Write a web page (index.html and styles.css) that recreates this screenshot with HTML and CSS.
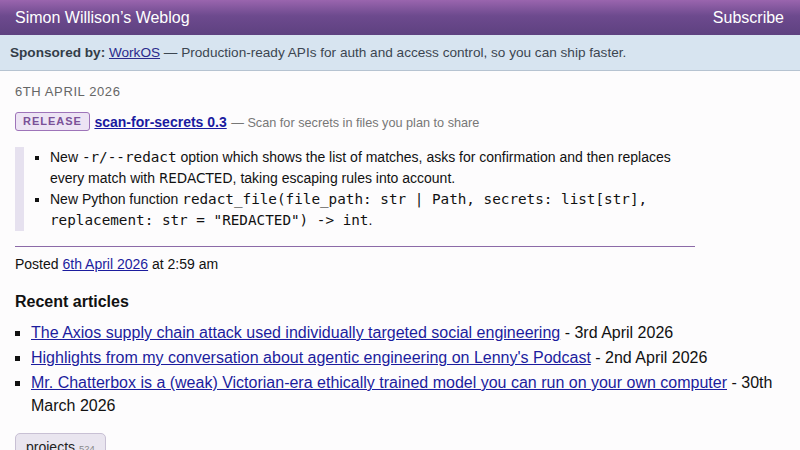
FILE: index.html
```html
<!DOCTYPE html>
<html>
<head>
<meta charset="utf-8">
<link rel="stylesheet" href="styles.css">
</head>
<body>
<header class="site-header">
  <a class="site-title" href="#">Simon Willison’s Weblog</a>
  <a class="subscribe" href="#">Subscribe</a>
</header>
<div class="sponsor">
  <p class="sponsor-text"><strong>Sponsored by:</strong> <a href="#">WorkOS</a> — Production-ready APIs for auth and access control, so you can ship faster.</p>
</div>
<main class="content">
  <div class="entry">
    <p class="date">6th April 2026</p>
    <p class="release-line"><span class="badge">Release</span> <a class="release-title" href="#">scan-for-secrets 0.3</a> <span class="release-desc">— Scan for secrets in files you plan to share</span></p>
    <blockquote class="notes">
      <ul>
        <li>New <code>-r/--redact</code> option which shows the list of matches, asks for confirmation and then replaces every match with <span class="caps">REDACTED</span>, taking escaping rules into account.</li>
        <li>New Python function <code>redact_file(file_path: str | Path, secrets: list[str], replacement: str = "REDACTED") -&gt; int</code>.</li>
      </ul>
    </blockquote>
    <p class="posted">Posted <a href="#">6th April 2026</a> at 2:59 am</p>
  </div>
  <h3 class="recent-head">Recent articles</h3>
  <ul class="recent">
    <li><a href="#">The Axios supply chain attack used individually targeted social engineering</a> - 3rd April 2026</li>
    <li><a href="#">Highlights from my conversation about agentic engineering on Lenny's Podcast</a> - 2nd April 2026</li>
    <li><a href="#">Mr. Chatterbox is a (weak) Victorian-era ethically trained model you can run on your own computer</a> - 30th March 2026</li>
  </ul>
  <div class="tags">
    <a class="tag" href="#">projects <span class="count">524</span></a>
  </div>
</main>
</body>
</html>
```
FILE: styles.css
```css
html, body {
  margin: 0;
  padding: 0;
}
body {
  background: #fdfcfd;
  font-family: "Liberation Sans", Arial, sans-serif;
  color: #111;
}
a {
  color: #1c1c9e;
}
.site-header {
  height: 35px;
  box-sizing: border-box;
  display: flex;
  justify-content: space-between;
  align-items: center;
  padding: 0 16px 0 15px;
  background: linear-gradient(to bottom, #9a65ae 0%, #6d4a8e 45%, #5e4180 100%);
}
.site-header a {
  color: #fff;
  text-decoration: none;
  font-size: 16px;
}
.sponsor {
  height: 36px;
  box-sizing: border-box;
  padding: 0 10px;
  background: #d7e4f0;
  border-bottom: 1px solid #b6c3d1;
  color: #3c4651;
}
.sponsor-text {
  margin: 0;
  font-size: 13.6px;
  line-height: 35px;
}
.sponsor strong {
  color: #333d48;
}
.sponsor a {
  color: #2a2a8c;
}
.content {
  padding: 0 15px;
}
.entry {
  width: 680px;
}
.date {
  margin: 13px 0 0;
  font-size: 13px;
  text-transform: uppercase;
  letter-spacing: 0.6px;
  color: #666;
  line-height: 16px;
}
.release-line {
  margin: 12px 0 0;
  line-height: 20px;
  height: 20px;
}
.badge {
  display: inline-block;
  vertical-align: top;
  box-sizing: border-box;
  height: 19px;
  line-height: 17px;
  padding: 0 7px;
  border: 1px solid #9e74b9;
  border-radius: 3px;
  background: #ede4f4;
  color: #7b5198;
  font-size: 11px;
  font-weight: bold;
  letter-spacing: 1px;
  text-transform: uppercase;
}
.release-title {
  font-weight: bold;
  font-size: 14px;
  color: #1a1aa0;
}
.release-desc {
  font-size: 12.7px;
  color: #777;
}
.notes {
  margin: 15px 0 0;
  padding: 0;
  border-left: 9px solid #e6e1ef;
  min-height: 83px;
}
.notes ul {
  margin: 0;
  padding: 0 0 0 26px;
  list-style: square;
  font-size: 14px;
  line-height: 21px;
  color: #111;
}
.notes code {
  font-family: "DejaVu Sans Mono", monospace;
  font-size: 14.3px;
}
.caps {
  font-family: "DejaVu Sans", sans-serif;
  font-size: 13.5px;
}
.posted {
  margin: 15px 0 0;
  padding-top: 7px;
  border-top: 1px solid #8c6aa8;
  font-size: 14px;
  line-height: 20px;
}
.recent-head {
  margin: 17px 0 0;
  font-size: 16px;
  line-height: 22px;
  font-weight: bold;
}
.recent {
  margin: 8px 0 0;
  padding: 0 0 0 16px;
  list-style: square;
  font-size: 16px;
  line-height: 23px;
  max-width: 770px;
}
.recent li {
  margin-bottom: 2px;
}
.tags {
  margin-top: 16px;
}
.tag {
  display: inline-block;
  padding: 5px 10px;
  border: 1px solid #c8c0d4;
  border-radius: 5px;
  background: #e9e5ef;
  color: #222;
  text-decoration: none;
  font-size: 14px;
}
.count {
  font-size: 9.5px;
  color: #888;
}
```
